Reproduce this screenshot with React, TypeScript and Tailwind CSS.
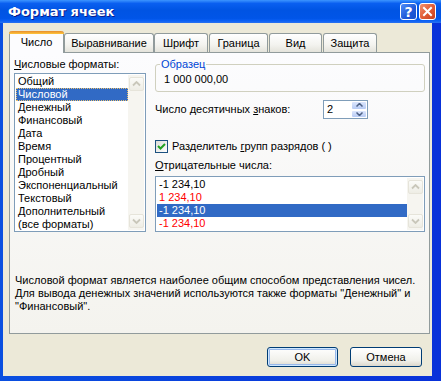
import React from "react";

const ScrollBtn = ({ down }: { down?: boolean }) => (
  <div className="w-[15px] h-[14px] rounded-[2px] border border-[#E6E4DA] bg-[linear-gradient(180deg,#FBFBF8,#EEEDE5)] flex items-center justify-center">
    <svg width="9" height="6" viewBox="0 0 9 6">
      <path
        d={down ? "M1 1.5 L4.5 5 L8 1.5" : "M1 4.5 L4.5 1 L8 4.5"}
        fill="none"
        stroke="#C9C7BA"
        strokeWidth="1.8"
      />
    </svg>
  </div>
);

const ScrollBar = () => (
  <div className="w-[16px] h-full bg-[#F6F5F0] flex flex-col justify-between py-[2px] pl-px">
    <ScrollBtn />
    <ScrollBtn down />
  </div>
);

const formats = [
  "Общий",
  "Числовой",
  "Денежный",
  "Финансовый",
  "Дата",
  "Время",
  "Процентный",
  "Дробный",
  "Экспоненциальный",
  "Текстовый",
  "Дополнительный",
  "(все форматы)",
];

const tabs: { label: string; w: string; ml: string }[] = [
  { label: "Выравнивание", w: "w-[90px]", ml: "ml-0" },
  { label: "Шрифт", w: "w-[54px]", ml: "ml-0" },
  { label: "Граница", w: "w-[59px]", ml: "ml-px" },
  { label: "Вид", w: "w-[53px]", ml: "ml-px" },
  { label: "Защита", w: "w-[54px]", ml: "ml-px" },
];

export default function App() {
  return (
    <div className="w-[441px] h-[381px] flex flex-col overflow-hidden bg-[#0831D9] text-[11px] leading-[13px] text-black font-['Liberation_Sans',Arial,sans-serif]">
      {/* Title bar */}
      <div className="h-[23px] flex items-center pl-[8px] pr-[5px] bg-[linear-gradient(180deg,#3D95FF_0%,#0A5FF0_15%,#0054E3_45%,#0055E8_80%,#0A60F5_90%,#2A72F0_100%)]">
        <span className="flex-1 text-white font-bold text-[13px] leading-[16px] font-['DejaVu_Sans',sans-serif] [text-shadow:1px_1px_0_#0A1C8C]">
          Формат ячеек
        </span>
        <div className="w-[17px] h-[17px] rounded-[3px] border border-white bg-[linear-gradient(135deg,#4F8DF7,#1E58D8_60%,#1A4FCB)] flex items-center justify-center text-white font-bold text-[14px] leading-none font-['DejaVu_Sans',sans-serif]">
          ?
        </div>
        <div className="ml-[2px] w-[17px] h-[17px] rounded-[3px] border border-white bg-[linear-gradient(135deg,#F2916F,#E05A32_55%,#C4401E)] flex items-center justify-center">
          <svg width="11" height="11" viewBox="0 0 11 11">
            <path d="M2 2 L9 9 M9 2 L2 9" stroke="white" strokeWidth="2" strokeLinecap="square" />
          </svg>
        </div>
      </div>

      {/* Frame */}
      <div className="flex-1 flex pl-[3px] pr-[9px] pb-[5px] bg-[linear-gradient(90deg,#0A4FE0,#0831D9)]">
        <div className="flex-1 bg-[#ECE9D8] flex flex-col">
          {/* Tabs */}
          <div className="mt-[8px] ml-[6px] h-[21px] flex items-end">
            <div className="relative z-10 w-[55px] h-[22px] -mb-px bg-[#FCFCFE] border-x border-[#919B9C] rounded-t-[3px] flex flex-col">
              <div className="h-[3px] rounded-t-[3px] bg-[linear-gradient(180deg,#E68B2C,#FFC73C)] -mx-px" />
              <div className="flex-1 flex items-center justify-center pb-[2px]">Число</div>
            </div>
            {tabs.map((t) => (
              <div
                key={t.label}
                className={`${t.w} ${t.ml} h-[19px] border border-b-0 border-[#919B9C] rounded-t-[3px] bg-[linear-gradient(180deg,#FFFFFF,#F3F3EF_60%,#E4E3DB)] flex items-center justify-center pt-px`}
              >
                {t.label}
              </div>
            ))}
          </div>

          {/* Panel */}
          <div className="ml-[6px] w-[421px] h-[282px] border border-[#919B9C] bg-[linear-gradient(180deg,#FCFCFE,#F4F3EE)] flex flex-col pl-[4px] pt-[5px]">
            <div className="flex">
              {/* Left column */}
              <div className="w-[132px] flex flex-col">
                <div className="h-[13px] whitespace-nowrap">
                  <span className="underline underline-offset-[1px]">Ч</span>исловые форматы:
                </div>
                <div className="mt-[2px] h-[159px] border border-[#7F9DB9] bg-white flex p-px">
                  <div className="flex-1 flex flex-col">
                    {formats.map((f, i) =>
                      i === 1 ? (
                        <div
                          key={f}
                          className="h-[13px] bg-[#316AC5] text-white pl-[2px] outline-1 outline-dotted outline-[#E8C070] -outline-offset-1 whitespace-nowrap"
                        >
                          {f}
                        </div>
                      ) : (
                        <div key={f} className="h-[13px] pl-[2px] whitespace-nowrap">
                          {f}
                        </div>
                      )
                    )}
                  </div>
                  <ScrollBar />
                </div>
              </div>

              {/* Right column */}
              <div className="ml-[9px] w-[270px] flex flex-col">
                <div className="relative mt-[6px] h-[28px] border border-[#D0D0BF] rounded-[3px] flex items-center pl-[8px] pt-[2px]">
                  <span className="absolute left-[4px] -top-[7px] px-px bg-[#FBFBFC] text-[#0046D5] leading-[13px]">
                    Образец
                  </span>
                  1 000 000,00
                </div>

                <div className="mt-[8px] h-[19px] flex items-center">
                  <div className="w-[168px] whitespace-nowrap">
                    Число десятичных <span className="underline underline-offset-[1px]">з</span>наков:
                  </div>
                  <div className="w-[45px] h-[19px] border border-[#7F9DB9] bg-white flex">
                    <div className="flex-1 pl-[3px] flex items-center">2</div>
                    <div className="w-[16px] flex flex-col">
                      <div className="flex-1 rounded-[2px] border border-white bg-[linear-gradient(180deg,#DCE6FC,#B7CBF5)] flex items-center justify-center">
                        <svg width="7" height="4" viewBox="0 0 7 4">
                          <path d="M0.5 3.5 L3.5 0.5 L6.5 3.5" fill="none" stroke="#4D6185" strokeWidth="1.5" />
                        </svg>
                      </div>
                      <div className="flex-1 rounded-[2px] border border-white bg-[linear-gradient(180deg,#DCE6FC,#B7CBF5)] flex items-center justify-center">
                        <svg width="7" height="4" viewBox="0 0 7 4">
                          <path d="M0.5 0.5 L3.5 3.5 L6.5 0.5" fill="none" stroke="#4D6185" strokeWidth="1.5" />
                        </svg>
                      </div>
                    </div>
                  </div>
                </div>

                <div className="mt-[21px] h-[13px] flex items-center">
                  <div className="w-[13px] h-[13px] border border-[#1C5180] bg-[linear-gradient(135deg,#DCDCD7,#FFFFFF)] flex items-center justify-center">
                    <svg width="9" height="9" viewBox="0 0 9 9">
                      <path d="M1 4 L3.5 6.5 L8 2" fill="none" stroke="#21A121" strokeWidth="2" />
                    </svg>
                  </div>
                  <span className="ml-[4px] whitespace-nowrap">
                    Разделитель <span className="underline underline-offset-[1px]">г</span>рупп разрядов ( )
                  </span>
                </div>

                <div className="mt-[6px] h-[13px] whitespace-nowrap">
                  <span className="underline underline-offset-[1px]">О</span>трицательные числа:
                </div>

                <div className="mt-[4px] h-[56px] border border-[#7F9DB9] bg-white flex p-px">
                  <div className="flex-1 flex flex-col">
                    <div className="h-[13px] pl-[2px]">-1 234,10</div>
                    <div className="h-[13px] pl-[2px] text-[#FF0000]">1 234,10</div>
                    <div className="h-[13px] pl-[2px] bg-[#316AC5] text-white">-1 234,10</div>
                    <div className="h-[13px] pl-[2px] text-[#FF0000]">-1 234,10</div>
                  </div>
                  <ScrollBar />
                </div>
              </div>
            </div>

            <div className="mt-[42px] pl-px whitespace-nowrap">
              Числовой формат является наиболее общим способом представления чисел.
              <br />
              Для вывода денежных значений используются также форматы "Денежный" и
              <br />
              "Финансовый".
            </div>
          </div>

          {/* Buttons */}
          <div className="mt-[13px] flex justify-end gap-[12px] pr-[10px]">
            <div className="w-[71px] h-[20px] rounded-[3px] border border-[#003C74] bg-[linear-gradient(180deg,#FFFFFF,#F0F0EA_70%,#DCD8CC)] [box-shadow:inset_0_0_0_1px_#CEE7FF,inset_0_0_0_2px_#98B8EA] flex items-center justify-center">
              OK
            </div>
            <div className="w-[72px] h-[20px] rounded-[3px] border border-[#003C74] bg-[linear-gradient(180deg,#FFFFFF,#F0F0EA_70%,#DCD8CC)] flex items-center justify-center">
              Отмена
            </div>
          </div>
        </div>
      </div>
    </div>
  );
}
